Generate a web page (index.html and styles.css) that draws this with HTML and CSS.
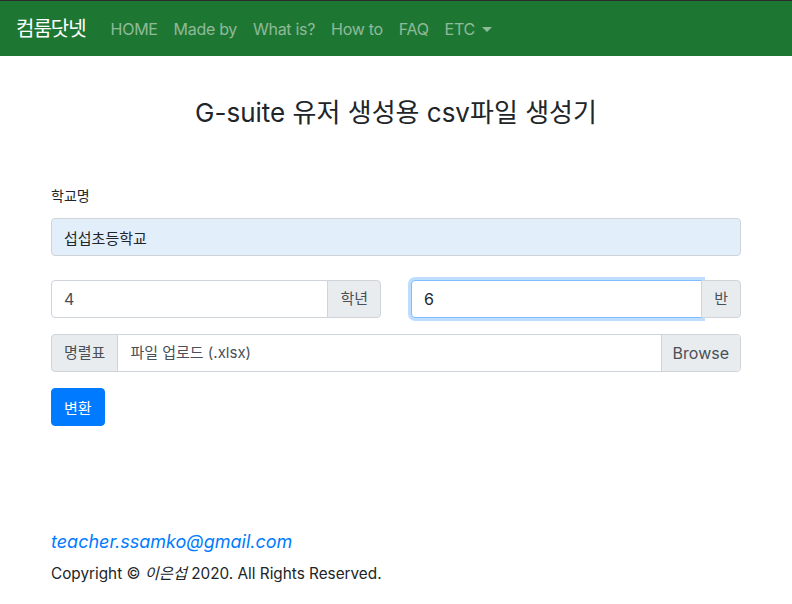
FILE: index.html
```html
<!DOCTYPE html>
<html lang="ko">
<head>
    <meta charset="UTF-8">
    <meta name="viewport" content="width=device-width, initial-scale=1.0">
    <title>G-suite 유저 생성용 csv파일 생성기</title>
    <link rel="stylesheet" href="styles.css">
</head>
<body>

<nav class="navbar">
    <a class="brand" href="#">컴룸닷넷</a>
    <ul class="nav">
        <li><a href="#">HOME</a></li>
        <li><a href="#">Made by</a></li>
        <li><a href="#">What is?</a></li>
        <li><a href="#">How to</a></li>
        <li><a href="#">FAQ</a></li>
        <li><a href="#" class="dropdown">ETC</a></li>
    </ul>
</nav>

<div class="container">
    <h3 class="title">G-suite 유저 생성용 csv파일 생성기</h3>

    <form action="#" id="convertForm">
        <div class="formGroup">
            <label for="school">학교명</label>
            <input type="text" id="school" class="control autofill" value="섭섭초등학교">
        </div>

        <div class="twoCols">
            <div class="inputGroup">
                <input type="text" id="grade" class="control" value="4">
                <span class="addon append">학년</span>
            </div>
            <div class="inputGroup">
                <input type="text" id="classNo" class="control focused" value="6">
                <span class="addon append">반</span>
            </div>
        </div>

        <div class="inputGroup fileGroup">
            <span class="addon prepend">명렬표</span>
            <label class="fileLabel" for="fileInput">
                <span class="fileText">파일 업로드 (.xlsx)</span>
                <span class="browse">Browse</span>
            </label>
            <input type="file" id="fileInput" class="hiddenFile">
        </div>

        <button type="submit" class="btnPrimary">변환</button>
    </form>

    <footer class="footer">
        <p class="mail"><a href="#">teacher.ssamko@gmail.com</a></p>
        <p class="copy">Copyright &copy; <em>이은섭</em> 2020. All Rights Reserved.</p>
    </footer>
</div>

</body>
</html>
```

FILE: styles.css
```css
body {
    font-family: Inter, "Noto Sans CJK KR", "Noto Sans", sans-serif;
    font-size: 16px;
    line-height: 1.5;
    margin: 0;
    padding: 0;
    color: #212529;
    background-color: #fff;
}
a {
    text-decoration: none;
}

/* top bar */
.navbar {
    display: flex;
    align-items: center;
    height: 55px;
    padding: 0 16px;
    border-top: 1px solid #2b2b2b;
    background-color: #1e7633;
}
.brand {
    font-size: 20px;
    color: #fff;
    margin-right: 17px;
    letter-spacing: -1px;
}
.nav {
    display: flex;
    list-style: none;
    margin: 0;
    padding: 0;
}
.nav a {
    display: block;
    padding: 8px 8px;
    letter-spacing: -0.3px;
    color: rgba(255, 255, 255, 0.5);
}
.dropdown::after {
    content: "";
    display: inline-block;
    margin-left: 7px;
    vertical-align: 3px;
    border-top: 5px solid;
    border-left: 5px solid transparent;
    border-right: 5px solid transparent;
}

/* main */
.container {
    max-width: 690px;
    margin: 0 auto;
    padding: 0 15px;
}
.title {
    font-size: 26px;
    font-weight: 400;
    line-height: 1.2;
    text-align: center;
    margin: 41px 0 55px;
}
.formGroup {
    margin-bottom: 24px;
}
.formGroup label {
    display: inline-block;
    font-size: 14px;
    margin-bottom: 12px;
}
.control {
    display: block;
    box-sizing: border-box;
    width: 100%;
    height: 38px;
    padding: 6px 12px;
    font-family: inherit;
    font-size: 16px;
    color: #495057;
    background-color: #fff;
    border: 1px solid #ced4da;
    border-radius: 4px;
}
.autofill {
    background-color: #e3eefb;
    color: #212529;
    font-size: 15px;
}
.focused {
    border-color: #80bdff;
    box-shadow: 0 0 0 3px rgba(0, 123, 255, 0.25);
    color: #212529;
}

.twoCols {
    display: grid;
    grid-template-columns: 1fr 1fr;
    column-gap: 30px;
    margin-bottom: 16px;
}
.inputGroup {
    display: flex;
}
.inputGroup .control {
    flex: 1;
    min-width: 0;
    border-top-right-radius: 0;
    border-bottom-right-radius: 0;
}
.addon {
    display: flex;
    align-items: center;
    box-sizing: border-box;
    height: 38px;
    padding: 0 12px;
    font-size: 15px;
    color: #495057;
    background-color: #e9ecef;
    border: 1px solid #ced4da;
    position: relative;
}
.append {
    margin-left: -1px;
    border-radius: 0 4px 4px 0;
}
.prepend {
    border-radius: 4px 0 0 4px;
}

.fileGroup {
    margin-bottom: 16px;
}
.fileLabel {
    flex: 1;
    display: flex;
    align-items: center;
    box-sizing: border-box;
    height: 38px;
    margin-left: -1px;
    border: 1px solid #ced4da;
    border-radius: 0 4px 4px 0;
    color: #495057;
    overflow: hidden;
}
.fileText {
    flex: 1;
    padding: 0 12px;
    font-size: 15px;
}
.browse {
    display: flex;
    align-items: center;
    height: 100%;
    padding: 0 11px;
    background-color: #e9ecef;
    border-left: 1px solid #ced4da;
}
.hiddenFile {
    display: none;
}

.btnPrimary {
    height: 38px;
    padding: 0 12px;
    font-family: inherit;
    font-size: 15px;
    color: #fff;
    background-color: #007bff;
    border: 1px solid #007bff;
    border-radius: 4px;
}

/* footer */
.footer {
    margin-top: 102px;
}
.mail {
    font-size: 18px;
    font-style: italic;
    margin: 0 0 8px;
}
.mail a {
    color: #007bff;
}
.copy {
    font-size: 15.3px;
    margin: 0;
}
```
